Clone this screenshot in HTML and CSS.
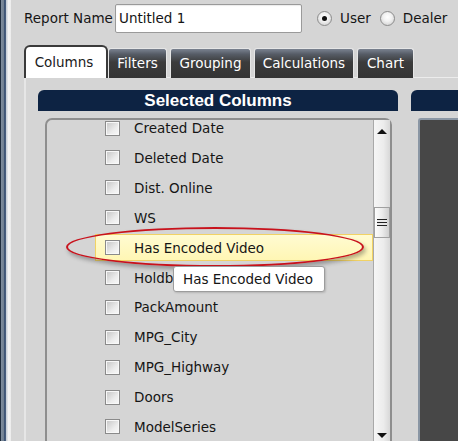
FILE: index.html
```html
<!DOCTYPE html>
<html>
<head>
<meta charset="utf-8">
<link rel="stylesheet" href="styles.css">
</head>
<body>
<div class="frame">
  <div class="edge"></div>
  <div class="main">
    <div class="toprow">
      <span class="label">Report Name</span>
      <div class="input">Untitled 1</div>
      <span class="radio checked"></span><span class="rlabel">User</span>
      <span class="radio"></span><span class="rlabel">Dealer</span>
    </div>
    <div class="tabs">
      <div class="tab active">Columns</div>
      <div class="tab t-filters">Filters</div>
      <div class="tab t-grouping">Grouping</div>
      <div class="tab t-calc">Calculations</div>
      <div class="tab t-chart">Chart</div>
    </div>
    <div class="panel">
      <div class="col1">
        <div class="header">Selected Columns</div>
        <div class="listbox">
          <div class="items">
            <div class="row"><div class="cell"><span class="cb"></span><span class="txt">Created Date</span></div></div>
            <div class="row"><div class="cell"><span class="cb"></span><span class="txt">Deleted Date</span></div></div>
            <div class="row"><div class="cell"><span class="cb"></span><span class="txt">Dist. Online</span></div></div>
            <div class="row"><div class="cell"><span class="cb"></span><span class="txt">WS</span></div></div>
            <div class="row"><div class="cell hover"><span class="cb"></span><span class="txt">Has Encoded Video</span></div></div>
            <div class="row"><div class="cell"><span class="cb"></span><span class="txt">Holdback</span></div></div>
            <div class="row"><div class="cell"><span class="cb"></span><span class="txt">PackAmount</span></div></div>
            <div class="row"><div class="cell"><span class="cb"></span><span class="txt">MPG_City</span></div></div>
            <div class="row"><div class="cell"><span class="cb"></span><span class="txt">MPG_Highway</span></div></div>
            <div class="row"><div class="cell"><span class="cb"></span><span class="txt">Doors</span></div></div>
            <div class="row"><div class="cell"><span class="cb"></span><span class="txt">ModelSeries</span></div></div>
          </div>
          <div class="scrollbar">
            <span class="arrow up"></span>
            <span class="thumb"><span class="grip"></span></span>
            <span class="arrow down"></span>
          </div>
          <div class="ellipse"></div>
          <div class="tooltip">Has Encoded Video</div>
        </div>
      </div>
      <div class="col2">
        <div class="header"></div>
        <div class="darkbox"></div>
      </div>
    </div>
  </div>
</div>
</body>
</html>
```
FILE: styles.css
```css
html, body {
  margin: 0;
  padding: 0;
}
body {
  font-family: "DejaVu Sans", Verdana, sans-serif;
  font-size: 13.5px;
  color: #151515;
  background: #d5d5d5;
}
.frame {
  display: flex;
  width: 458px;
  height: 441px;
  overflow: hidden;
}
.edge {
  width: 11px;
  flex: none;
  background: linear-gradient(to right, #1e2c3c 0, #1e2c3c 1px, #7f8d9d 1px, #6e7e90 4px, #3c5272 4px, #4a6080 6px, #c2cad4 6px, #e6e8ea 8px, #f4f4f4 8px, #ececec 11px);
}
.main {
  flex: 1;
  min-width: 0;
  padding: 4px 0 0 13px;
  background: #d5d5d5;
}
.toprow {
  display: flex;
  align-items: center;
  height: 28px;
  white-space: nowrap;
}
.label {
  width: 91px;
}
.input {
  box-sizing: border-box;
  width: 187px;
  height: 29px;
  border: 1px solid #9a9a9a;
  border-radius: 2px;
  background: #fff;
  padding: 0 0 0 3px;
  line-height: 27px;
  box-shadow: inset 0 1px 1px rgba(0,0,0,0.08);
}
.radio {
  box-sizing: border-box;
  width: 15px;
  height: 15px;
  border-radius: 50%;
  border: 1px solid #8c8c8c;
  background: radial-gradient(circle at 50% 40%, #ffffff 0, #f2f2f2 40%, #c8c8c8 100%);
  margin-left: 15px;
  display: flex;
  align-items: center;
  justify-content: center;
  flex: none;
}
.radio + .rlabel {
  margin-left: 8px;
}
.rlabel + .radio {
  margin-left: 9px;
}
.radio.checked::after {
  content: "";
  width: 5px;
  height: 5px;
  border-radius: 50%;
  background: #111;
}
.tabs {
  display: flex;
  align-items: flex-end;
  margin-top: 13px;
  height: 33px;
  position: relative;
  z-index: 1;
  margin-bottom: -1px;
}
.tab {
  box-sizing: border-box;
  height: 30px;
  border: 1px solid #e6e6e6;
  border-bottom: none;
  border-radius: 3px 3px 0 0;
  background: linear-gradient(to bottom, #7a8290 0, #565c66 18%, #3c3c3c 45%, #343434 100%);
  color: #fff;
  line-height: 28px;
  text-align: center;
  margin-right: 3px;
}
.tab.active {
  height: 33px;
  width: 84px;
  border: 2px solid #3a3a3a;
  border-bottom: none;
  border-radius: 6px 6px 0 0;
  background: #fff;
  color: #1a1a1a;
  line-height: 30px;
  margin-right: 0;
  padding-right: 4px;
}
.t-filters { width: 59px; }
.t-grouping { width: 81px; }
.t-calc { width: 100px; }
.t-chart { width: 57px; }
.panel {
  display: flex;
  border-top: 1px solid #ececec;
  border-left: 2px solid #e6e6e6;
  padding: 12px 0 0 12px;
  height: 400px;
}
.col1 {
  width: 360px;
  flex: none;
}
.col2 {
  flex: 1;
  margin-left: 13px;
}
.header {
  height: 21px;
  border-radius: 6px 6px 0 0;
  background: #0d2343;
  color: #fff;
  font-family: "Liberation Sans", Arial, sans-serif;
  font-weight: bold;
  font-size: 17px;
  line-height: 21px;
  text-align: center;
}
.col2 .header {
  border-radius: 6px 0 0 0;
}
.listbox {
  position: relative;
  box-sizing: border-box;
  display: flex;
  margin: 7px 6px 0 7px;
  height: 330px;
  border: 2px solid #8e8e8e;
  border-radius: 7px 7px 0 0;
  background: #d5d5d5;
}
.items {
  flex: 1;
  overflow: hidden;
  padding-left: 48px;
  border-radius: 5px 0 0 0;
}
.row {
  height: 29.9px;
  display: flex;
  align-items: center;
}
.row:first-child {
  margin-top: -6.9px;
}
.cell {
  box-sizing: border-box;
  flex: 1;
  height: 27px;
  display: flex;
  align-items: center;
  padding-left: 9px;
  border: 1px solid transparent;
  white-space: nowrap;
}
.cell.hover {
  background: linear-gradient(to bottom, #fffbd2 0, #fff6b4 100%);
  border-color: #f1d265;
}
.cb {
  box-sizing: border-box;
  width: 15px;
  height: 15px;
  border: 1px solid #8a8a8a;
  background: linear-gradient(135deg, #c4c4c4 0, #ececec 60%, #fafafa 100%);
  box-shadow: inset 0 0 0 1px #f8f8f8;
  margin-right: 14px;
  flex: none;
}
.scrollbar {
  width: 16px;
  flex: none;
  border-left: 1px solid #a9a9a9;
  background: linear-gradient(to right, #f6f6f6 0, #ececec 60%, #d8d8d8 100%);
  display: flex;
  flex-direction: column;
  align-items: center;
}
.arrow {
  width: 0;
  height: 0;
  border-left: 5px solid transparent;
  border-right: 5px solid transparent;
}
.arrow.up {
  margin-top: 9px;
  border-bottom: 5px solid #111;
}
.arrow.down {
  margin-top: 195px;
  border-top: 5px solid #111;
}
.thumb {
  box-sizing: border-box;
  width: 16px;
  height: 31px;
  margin-top: 73px;
  border: 1px solid #a0a0a0;
  background: linear-gradient(to right, #fdfdfd 0, #ececec 50%, #cfcfcf 100%);
  display: flex;
  align-items: center;
  justify-content: center;
}
.grip {
  width: 10px;
  height: 7px;
  background: repeating-linear-gradient(to bottom, #222 0, #222 1px, #e8e8e8 1px, #e8e8e8 3px);
}
.ellipse {
  position: absolute;
  left: 19px;
  top: 107px;
  width: 298px;
  height: 40px;
  box-sizing: border-box;
  border: 2px solid #c8121c;
  border-radius: 50%;
  box-shadow: 2px 3px 4px rgba(0,0,0,0.3);
}
.tooltip {
  position: absolute;
  left: 126px;
  top: 146px;
  box-sizing: border-box;
  width: 152px;
  height: 26px;
  background: #fff;
  border: 1px solid #9c9c9c;
  border-radius: 3px;
  padding-left: 9px;
  line-height: 24px;
  white-space: nowrap;
  box-shadow: 1px 1px 2px rgba(0,0,0,0.15);
}
.darkbox {
  margin: 7px 0 0 7px;
  height: 330px;
  border-top: 2px solid #8a96a4;
  border-left: 2px solid #8a96a4;
  border-radius: 3px 0 0 0;
  background: #474747;
}
```
